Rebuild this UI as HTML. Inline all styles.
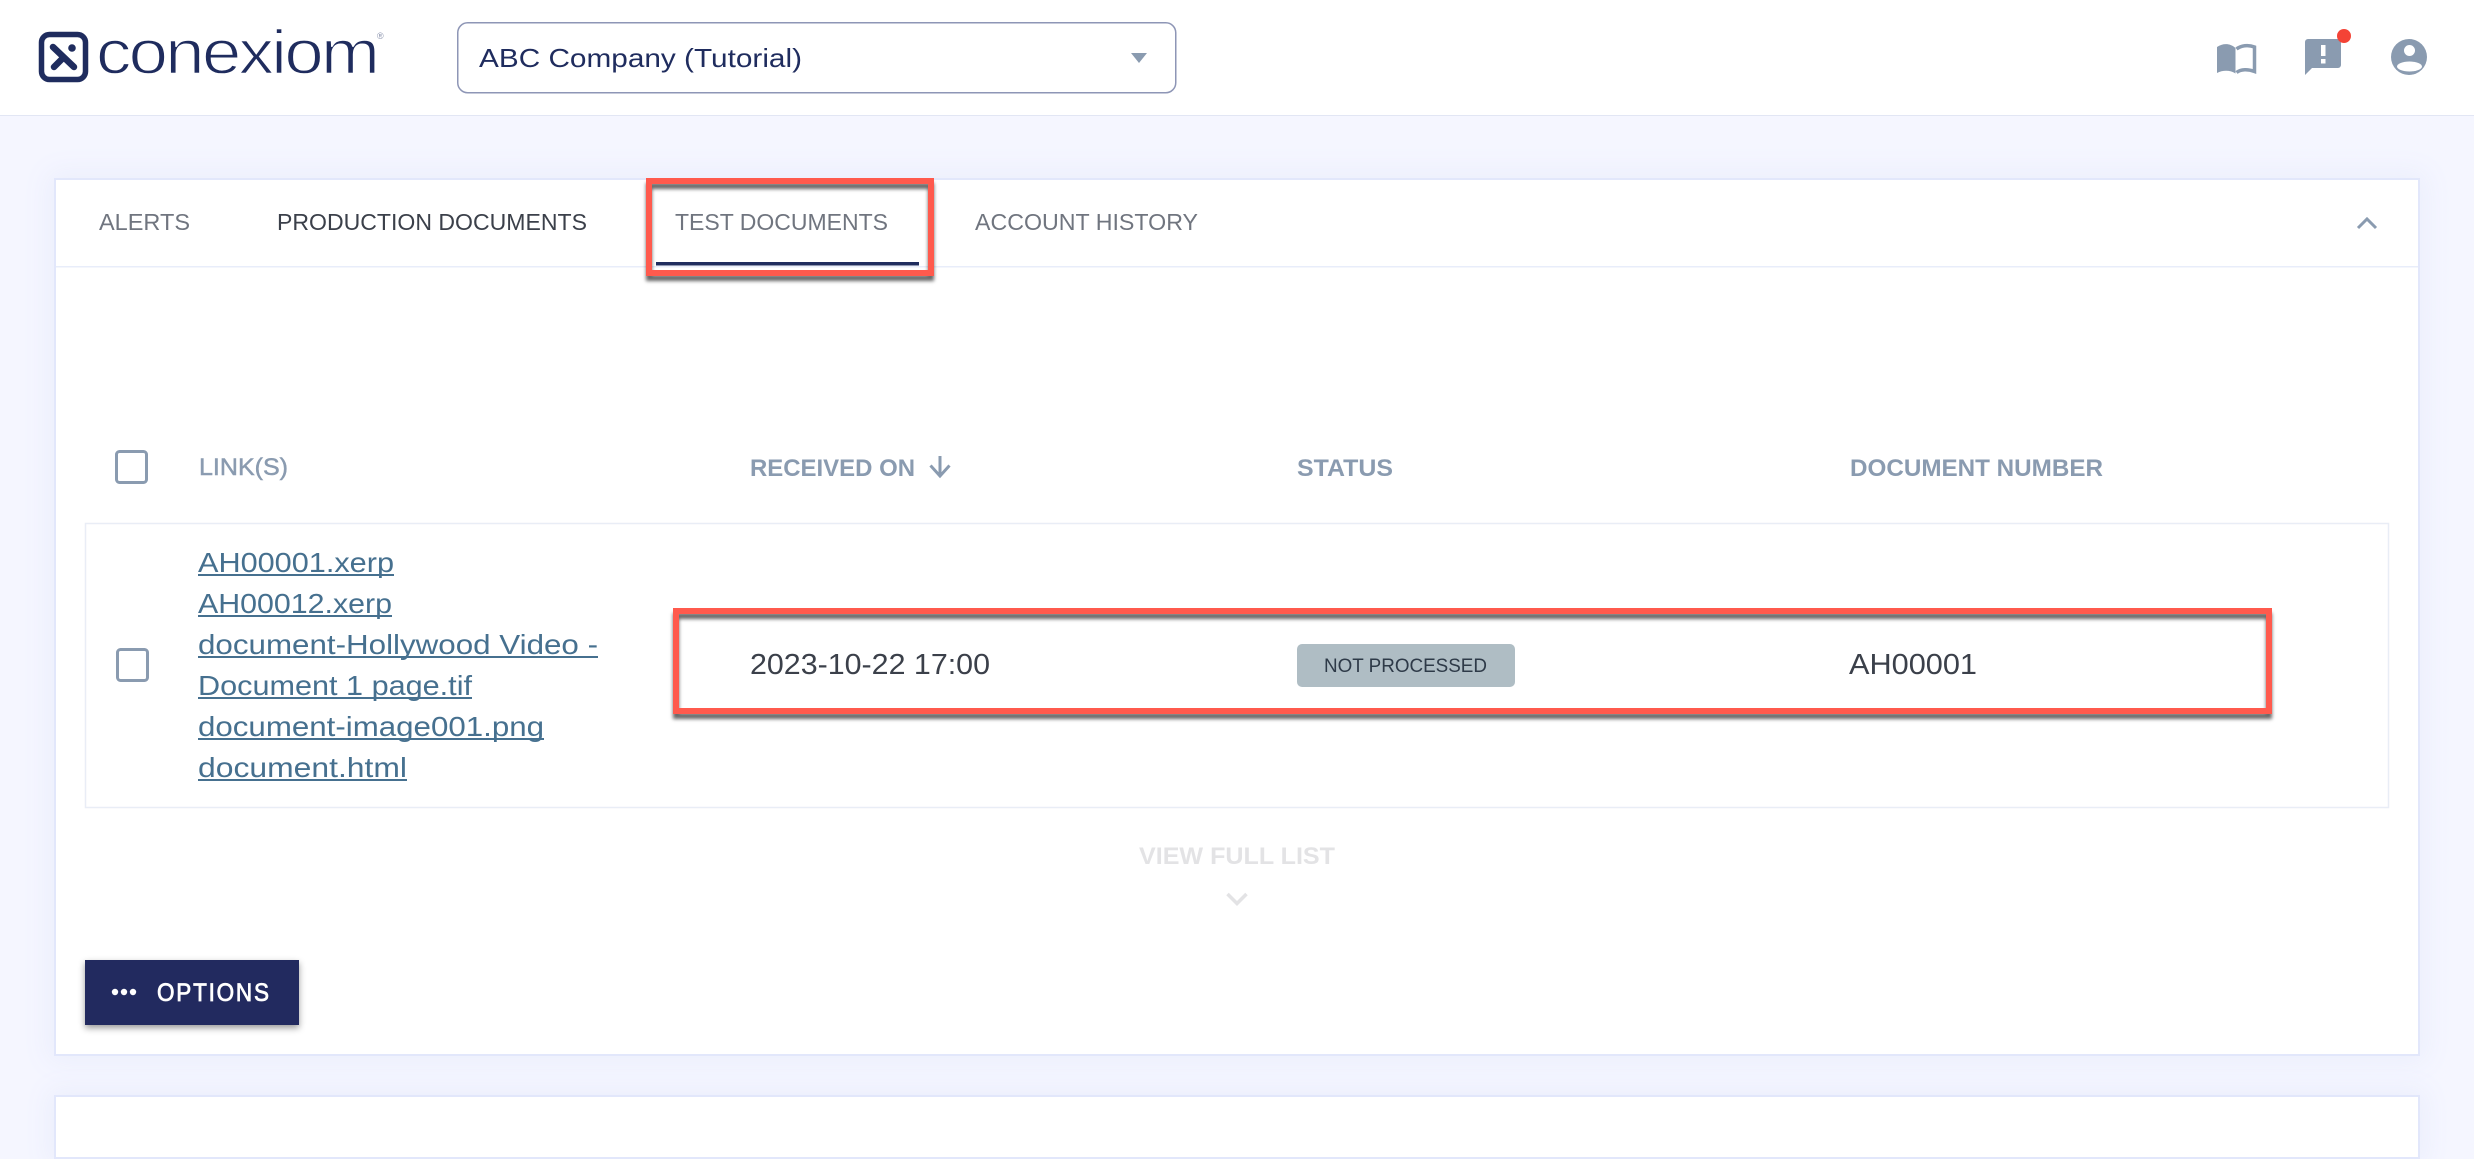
<!DOCTYPE html>
<html lang="en">
<head>
<meta charset="utf-8">
<title>Conexiom</title>
<style>
html,body{margin:0;padding:0;width:2474px;height:1104px;overflow:hidden;background:#f5f6ff;font-family:"Liberation Sans",sans-serif}
.hdr{position:absolute;left:0;top:0;width:2474px;height:115px;background:#fff;border-bottom:1px solid #e2e6f4}
.card{position:absolute;left:54px;width:2362px;background:#fff;border:2px solid #e2e7fb;box-shadow:0 0 26px 6px #ebeefc}
svg{position:absolute;left:0;top:0}
text{font-family:"Liberation Sans",sans-serif}
</style>
</head>
<body>
<div class="card" style="top:178px;height:874px"></div>
<div class="card" style="top:1095px;height:60px"></div>
<div class="hdr"></div>
<svg width="2474" height="1104" viewBox="0 0 2474 1104" xmlns="http://www.w3.org/2000/svg">
  <defs>
    <filter id="rs" x="-5%" y="-30%" width="110%" height="160%"><feDropShadow dx="0" dy="5" stdDeviation="1.8" flood-color="#000" flood-opacity=".6"/></filter>
    <filter id="bs" x="-10%" y="-20%" width="120%" height="150%"><feDropShadow dx="0" dy="3" stdDeviation="3.5" flood-color="#000" flood-opacity=".4"/></filter>
    <clipPath id="pc"><circle cx="2409" cy="57" r="18"/></clipPath>
  </defs>

  <!-- logo -->
  <rect x="41.500" y="34.500" width="44" height="45" rx="8" fill="none" stroke="#1f2c5e" stroke-width="5.500"/>
  <path d="M53 47L74 67M54 67L63 58" fill="none" stroke="#1f2c5e" stroke-width="6.500" stroke-linecap="round"/>
  <circle cx="72" cy="48" r="3.800" fill="#1f2c5e"/>
  <text transform="translate(96,73.500) scale(1.14,1)" x="0" y="0" font-size="62" fill="#1f2c5e" stroke="#fff" stroke-width="1.400" textLength="249" lengthAdjust="spacing">conexiom</text>
  <text x="377" y="39" font-size="9" fill="#8b93ad">®</text>

  <!-- select -->
  <rect x="457.750" y="22.750" width="718" height="70" rx="10" fill="#fff" stroke="#8e96b6" stroke-width="1.500"/>
  <text x="479" y="67" font-size="26" fill="#1f2c5e" textLength="323" lengthAdjust="spacingAndGlyphs">ABC Company (Tutorial)</text>
  <path d="M1131 53H1147L1139 63Z" fill="#8a9bb0"/>

  <!-- header icons -->
  <path d="M2217 47C2223 43 2230 43 2235.500 48V73.500C2230 70 2223 70 2217 73Z" fill="#8a9bb0"/>
  <path d="M2236.500 49C2241 45.500 2248 44.500 2254.500 47V71.500C2248 69 2241 69 2236.500 72.500" fill="none" stroke="#8a9bb0" stroke-width="3.500"/>
  <path d="M2308 39H2338a3 3 0 0 1 3 3V65a3 3 0 0 1-3 3H2312L2305 75V42a3 3 0 0 1 3-3Z" fill="#8a9bb0"/>
  <rect x="2321" y="45" width="4.500" height="11" fill="#fff"/>
  <rect x="2321" y="59" width="4.500" height="4.500" fill="#fff"/>
  <circle cx="2344" cy="36" r="7" fill="#f44336"/>
  <circle cx="2409" cy="57" r="18" fill="#8a9bb0"/>
  <circle cx="2409.500" cy="50.500" r="5.500" fill="#fff"/>
  <ellipse cx="2409.500" cy="66.500" rx="12.500" ry="5" fill="#fff" clip-path="url(#pc)"/>

  <!-- tabs -->
  <rect x="56" y="266" width="2362" height="1.500" fill="#e8edfa"/>
  <text x="99" y="230" font-size="23.500" fill="#70757f" textLength="91" lengthAdjust="spacingAndGlyphs">ALERTS</text>
  <text x="277" y="230" font-size="23.500" fill="#3b404a" textLength="310" lengthAdjust="spacingAndGlyphs">PRODUCTION DOCUMENTS</text>
  <text x="675" y="230" font-size="23.500" fill="#70757f" textLength="213" lengthAdjust="spacingAndGlyphs">TEST DOCUMENTS</text>
  <text x="975" y="230" font-size="23.500" fill="#70757f" textLength="223" lengthAdjust="spacingAndGlyphs">ACCOUNT HISTORY</text>
  <rect x="656" y="262" width="263" height="3.500" fill="#1f2c5e"/>
  <path d="M2358 228L2367 219L2376 228" fill="none" stroke="#8a9bb0" stroke-width="3"/>

  <!-- table head -->
  <rect x="116.500" y="451.500" width="30" height="31" rx="3" fill="#fff" stroke="#8a9bb0" stroke-width="3"/>
  <text x="199" y="475" font-size="24.500" fill="#8a9bb0" stroke="#8a9bb0" stroke-width=".5" textLength="89" lengthAdjust="spacingAndGlyphs">LINK(S)</text>
  <text x="750" y="476" font-size="24.500" font-weight="bold" fill="#8a9bb0" textLength="165" lengthAdjust="spacingAndGlyphs">RECEIVED ON</text>
  <path d="M940 456V476M930.500 465.500L940 476L949.500 465.500" fill="none" stroke="#8a9bb0" stroke-width="3"/>
  <text x="1297" y="476" font-size="24.500" font-weight="bold" fill="#8a9bb0" textLength="96" lengthAdjust="spacingAndGlyphs">STATUS</text>
  <text x="1850" y="476" font-size="24.500" font-weight="bold" fill="#8a9bb0" textLength="253" lengthAdjust="spacingAndGlyphs">DOCUMENT NUMBER</text>

  <!-- row -->
  <rect x="85.500" y="523.500" width="2303" height="284" fill="#fff" stroke="#e9edf6" stroke-width="1.500"/>
  <rect x="117.500" y="649.500" width="30" height="31" rx="3" fill="#fff" stroke="#8a9bb0" stroke-width="3"/>
  <g font-size="28" fill="#46708f">
    <text x="198" y="572" textLength="196" lengthAdjust="spacingAndGlyphs">AH00001.xerp</text>
    <text x="198" y="613" textLength="194" lengthAdjust="spacingAndGlyphs">AH00012.xerp</text>
    <text x="198" y="654" textLength="400" lengthAdjust="spacingAndGlyphs">document-Hollywood Video -</text>
    <text x="198" y="695" textLength="274" lengthAdjust="spacingAndGlyphs">Document 1 page.tif</text>
    <text x="198" y="736" textLength="346" lengthAdjust="spacingAndGlyphs">document-image001.png</text>
    <text x="198" y="777" textLength="209" lengthAdjust="spacingAndGlyphs">document.html</text>
  </g>
  <g fill="#46708f">
    <rect x="198" y="574" width="196" height="2"/>
    <rect x="198" y="615" width="194" height="2"/>
    <rect x="198" y="656" width="400" height="2"/>
    <rect x="198" y="697" width="274" height="2"/>
    <rect x="198" y="738" width="346" height="2"/>
    <rect x="198" y="779" width="209" height="2"/>
  </g>
  <text x="750" y="674" font-size="29" fill="#3b404a" textLength="240" lengthAdjust="spacingAndGlyphs">2023-10-22 17:00</text>
  <rect x="1297" y="644" width="218" height="43" rx="5" fill="#afbdc4"/>
  <text x="1324" y="672" font-size="19.500" fill="#2e3a48" textLength="163" lengthAdjust="spacingAndGlyphs">NOT PROCESSED</text>
  <text x="1849" y="674" font-size="29" fill="#3b404a" textLength="128" lengthAdjust="spacingAndGlyphs">AH00001</text>

  <!-- view full list -->
  <text x="1139" y="864" font-size="24.500" font-weight="bold" fill="#e3e3e5" textLength="196" lengthAdjust="spacingAndGlyphs">VIEW FULL LIST</text>
  <path d="M1227.500 894L1237 903.500L1246.500 894" fill="none" stroke="#e3e3e5" stroke-width="3.500"/>

  <!-- options -->
  <rect x="85" y="960" width="214" height="65" fill="#202c5e" filter="url(#bs)"/>
  <circle cx="115" cy="992" r="3.200" fill="#fff"/>
  <circle cx="124" cy="992" r="3.200" fill="#fff"/>
  <circle cx="133" cy="992" r="3.200" fill="#fff"/>
  <text transform="translate(157,1001) scale(.9,1)" x="0" y="0" font-size="25" fill="#fff" stroke="#fff" stroke-width=".8" textLength="124.400" lengthAdjust="spacing">OPTIONS</text>

  <!-- annotation boxes -->
  <rect x="649" y="181" width="282" height="92" fill="none" stroke="#ff5a4d" stroke-width="6" filter="url(#rs)"/>
  <rect x="676" y="611" width="1593" height="100" fill="none" stroke="#ff5a4d" stroke-width="6" filter="url(#rs)"/>
</svg>
</body>
</html>
